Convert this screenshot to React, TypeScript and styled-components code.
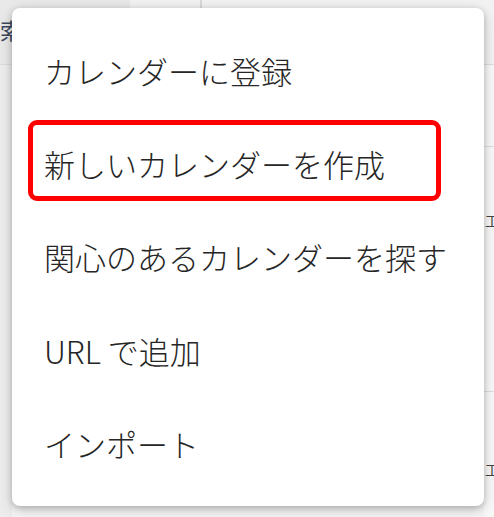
import styled, { createGlobalStyle } from "styled-components";

const GlobalStyle = createGlobalStyle`
  html, body {
    margin: 0;
    padding: 0;
    background: #ffffff;
  }
  body {
    font-family: "Noto Sans CJK JP", "Noto Sans", sans-serif;
    overflow: hidden;
  }
`;

const items = [
  "カレンダーに登録",
  "新しいカレンダーを作成",
  "関心のあるカレンダーを探す",
  "URL で追加",
  "インポート",
];

const App = () => {
  return (
    <Page>
      <GlobalStyle />
      <Backdrop>
        <TopBar>
          <SearchTab>
            <SearchLabel>検索</SearchLabel>
          </SearchTab>
          <TopRest />
        </TopBar>
        <Body>
          <SideStrip />
          <Main />
          <RightStrip>
            <RightCell />
            <RightCell>
              <Mark $offset={66}>工</Mark>
            </RightCell>
            <RightCell>
              <Mark $offset={70}>工</Mark>
            </RightCell>
          </RightStrip>
        </Body>
      </Backdrop>

      <Menu>
        {items.map((label, i) => (
          <Item key={label}>
            {label}
            {i === 1 && <Highlight />}
          </Item>
        ))}
      </Menu>
    </Page>
  );
};

export default App;

const Page = styled.div`
  position: relative;
  width: 494px;
  height: 517px;
  overflow: hidden;
`;

const Backdrop = styled.div`
  display: flex;
  flex-direction: column;
  width: 100%;
  height: 100%;
  background: #f7f7f7;
`;

const TopBar = styled.div`
  display: flex;
  height: 64px;
  border-bottom: 1px solid #dcdcdc;
`;

const SearchTab = styled.div`
  width: 130px;
  background: #e9e9e9;
  display: flex;
  align-items: center;
  overflow: hidden;
`;

const SearchLabel = styled.span`
  margin-left: -22px;
  margin-top: -6px;
  font-size: 22px;
  color: #3c4a5c;
`;

const TopRest = styled.div`
  flex: 1;
  background: #f2f2f2;
  border-left: 70px solid #f2f2f2;
  position: relative;
  &::after {
    content: "";
    position: absolute;
    left: 0;
    top: 0;
    bottom: 0;
    width: 2px;
    background: #d8d8d8;
  }
`;

const Body = styled.div`
  flex: 1;
  display: flex;
`;

const SideStrip = styled.div`
  width: 12px;
  background: #ededed;
`;

const Main = styled.div`
  flex: 1;
  background: #f4f4f4;
`;

const RightStrip = styled.div`
  width: 10px;
  display: grid;
  grid-template-rows: 82px 245px 1fr;
  background: #f8f8f8;
`;

const RightCell = styled.div`
  border-bottom: 1px solid #dadce0;
  overflow: hidden;
  display: flex;
  align-items: flex-start;
  &:last-child {
    border-bottom: none;
  }
`;

const Mark = styled.span<{ $offset: number }>`
  font-size: 14px;
  line-height: 14px;
  color: #444;
  margin-left: 1px;
  margin-top: ${(p) => p.$offset}px;
`;

const Menu = styled.div`
  position: absolute;
  left: 12px;
  top: 8px;
  width: 472px;
  height: 498px;
  box-sizing: border-box;
  padding: 16px 0;
  background: #ffffff;
  border-radius: 8px;
  box-shadow: 0 2px 6px rgba(0, 0, 0, 0.22), 0 4px 16px rgba(0, 0, 0, 0.14);
  display: flex;
  flex-direction: column;
`;

const Item = styled.div`
  position: relative;
  height: 93.2px;
  display: flex;
  align-items: center;
  padding-left: 32px;
  font-size: 31px;
  font-weight: 300;
  color: #262626;
  white-space: nowrap;
`;

const Highlight = styled.div`
  position: absolute;
  left: 16px;
  right: 43px;
  top: 3px;
  height: 81px;
  box-sizing: border-box;
  border: 5px solid #ff0000;
  border-radius: 9px;
`;
